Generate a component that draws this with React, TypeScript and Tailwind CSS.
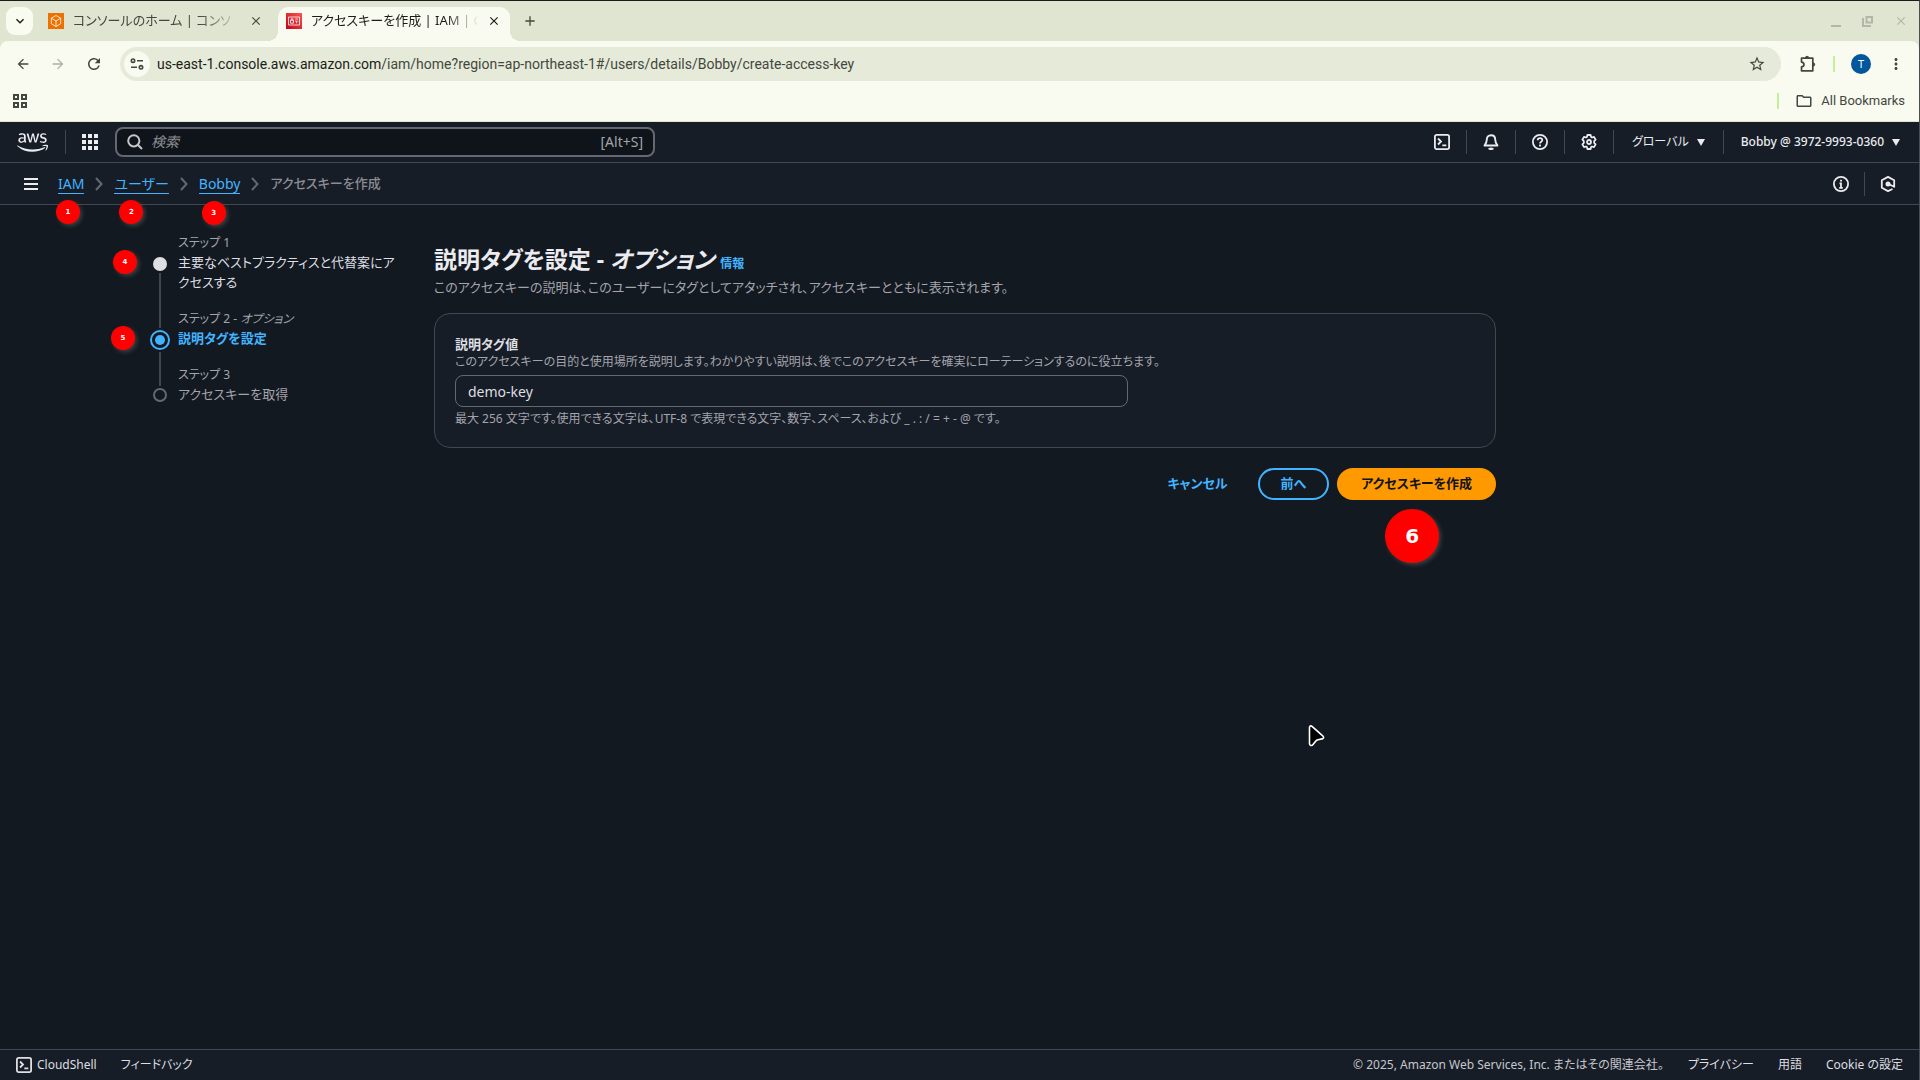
import React, { useState } from 'react';
import { FaAws } from 'react-icons/fa';
import {
  MdApps,
  MdArrowBack,
  MdArrowForward,
  MdClose,
  MdAdd,
  MdExpandMore,
  MdMoreVert,
  MdRefresh,
  MdStarOutline,
  MdOutlineFolder,
} from 'react-icons/md';

interface BadgeProps {
  n: number;
  className: string;
}

// Numbered callout that floats over the element it describes
const Badge: React.FC<BadgeProps> = ({ n, className }) => (
  <span
    className={`absolute z-10 flex items-center justify-center rounded-full bg-[#ff0000] font-bold text-white font-['DejaVu_Sans',sans-serif] shadow-[2px_2px_4px_rgba(90,90,90,0.6)] ${className}`}
  >
    {n}
  </span>
);

const smallBadge = 'h-6 w-6 text-[7px]';

const TerminalIcon = ({ className = '' }: { className?: string }) => (
  <svg viewBox="0 0 16 16" className={`h-4 w-4 ${className}`} fill="none" stroke="currentColor" strokeWidth="1.8">
    <rect x="0.9" y="0.9" width="14.2" height="14.2" rx="1.8" />
    <path d="M4 4.5 7 7.5 4 10.5M8.3 11.3h4" />
  </svg>
);

const BellIcon = () => (
  <svg viewBox="0 0 16 16" className="h-4 w-4" fill="none" stroke="currentColor" strokeWidth="1.9" strokeLinejoin="round">
    <path d="M8 1.2c-2.6 0-4.2 1.9-4.2 4.3 0 3-.9 4.3-2.3 6h13c-1.4-1.7-2.3-3-2.3-6C12.2 3.1 10.6 1.2 8 1.2z" />
    <path d="M6 14.2c.5.9 3.5.9 4 0" strokeWidth="2.4" />
  </svg>
);

const HelpIcon = () => (
  <svg viewBox="0 0 16 16" className="h-4 w-4" fill="none" stroke="currentColor" strokeWidth="1.8">
    <circle cx="8" cy="8" r="7.1" />
    <path d="M5.7 6.3C5.7 4.9 6.7 4.1 8 4.1s2.3.8 2.3 2C10.3 7.7 8 7.7 8 9.4" />
    <path d="M8 10.6v1.9" />
  </svg>
);

const GearIcon = () => (
  <svg viewBox="0 0 16 16" className="h-4 w-4" fill="none" stroke="currentColor" strokeWidth="1.8" strokeLinejoin="round">
    <path d="M6.4 1h3.2l.5 2 .9.5 2-.6 1.6 2.7-1.4 1.5v1.8l1.4 1.5-1.6 2.7-2-.6-.9.5-.5 2H6.4l-.5-2-.9-.5-2 .6-1.6-2.7 1.4-1.5V7.1L1.4 5.6 3 2.9l2 .6.9-.5z" />
    <circle cx="8" cy="8" r="2" />
  </svg>
);

const InfoIcon = () => (
  <svg viewBox="0 0 16 16" className="h-4 w-4" fill="none" stroke="currentColor" strokeWidth="1.8">
    <circle cx="8" cy="8" r="7.1" />
    <path d="M6.5 7.3H8v4.7M6.2 11.9h3.6M7.1 4.6h1.9" />
  </svg>
);

const HexIcon = () => (
  <svg viewBox="0 0 16 16" className="h-4 w-4" fill="none" stroke="currentColor" strokeWidth="1.8" strokeLinejoin="round">
    <path d="M12.5 13 8 15.1 1.8 11.7V4.3L8 .9l6.2 3.4v6.5L8.5 8" />
    <circle cx="8" cy="8" r="1.6" fill="currentColor" />
  </svg>
);

const Chevron = () => (
  <svg viewBox="0 0 8 14" className="h-[14px] w-2 text-[#656871]" fill="none" stroke="currentColor" strokeWidth="2">
    <path d="M1 1l5.5 6L1 13" />
  </svg>
);

const Caret = () => (
  <svg viewBox="0 0 8 7" className="h-[7px] w-2" fill="currentColor">
    <path d="M0 0h8L4 7z" />
  </svg>
);

const Tune = () => (
  <svg viewBox="0 0 14 12" className="h-3 w-[14px]" fill="none" stroke="currentColor" strokeWidth="1.6">
    <circle cx="3" cy="2.7" r="1.7" />
    <path d="M7 2.7h6M1 9.3h6" />
    <circle cx="11" cy="9.3" r="1.7" />
  </svg>
);

const Puzzle = () => (
  <svg viewBox="0 0 18 18" className="h-[18px] w-[18px]" fill="none" stroke="currentColor" strokeWidth="1.7" strokeLinejoin="round">
    <path d="M2.5 3.2h11.3v12.6H2.5v-3.9c3.3-.4 3.3-4.4 0-4.8z" />
    <path d="M6.4 3a1.7 1.7 0 0 1 3.4 0zM14 7.8a1.7 1.7 0 0 1 0 3.4z" fill="currentColor" strokeWidth="1" />
  </svg>
);

const CubeFavicon = () => (
  <svg viewBox="0 0 16 16" className="h-4 w-4 shrink-0" fill="none" stroke="#fff" strokeWidth="0.8">
    <rect width="16" height="16" fill="#ed7100" stroke="none" />
    <path d="M8 2.5l4.7 2.7v5.5L8 13.500l-4.700-2.800V5.200zM3.300 5.200 8 8l4.700-2.800M8 8v5.500" />
  </svg>
);

const IamFavicon = () => (
  <svg viewBox="0 0 16 16" className="h-4 w-4 shrink-0" fill="none" stroke="#fff" strokeWidth="0.8">
    <defs>
      <linearGradient id="iam" x1="0" y1="1" x2="1" y2="0">
        <stop offset="0" stopColor="#bd0816" />
        <stop offset="1" stopColor="#ff5252" />
      </linearGradient>
    </defs>
    <rect width="16" height="16" fill="url(#iam)" stroke="none" />
    <path d="M2.5 4h11v8h-11zM4.500 7.300h3v2.900h-3zM5.200 7.200V5.800h1.600v1.400M9.200 6h2.800M9.200 8h1.300v2.200M11.700 7.800v.9" />
  </svg>
);

const TabStrip = () => (
  <div className="flex h-10 items-stretch bg-[#e0e5d1] text-[#1b1d18]">
    <button aria-label="Search tabs" className="mt-[6px] ml-[6px] flex h-7 w-[27px] items-center justify-center rounded-[9px] bg-[#f9faf0]">
      <MdExpandMore className="h-4 w-4" />
    </button>
    <div className="ml-[15px] flex w-[230px] items-center pr-[15px] text-[#43483e]">
      <CubeFavicon />
      <span className="ml-[9px] min-w-0 flex-1 whitespace-nowrap text-[13px] [mask-image:linear-gradient(to_right,#000_75%,transparent)]">
        コンソールのホーム | コンソ
      </span>
      <button aria-label="Close tab" className="ml-2"><MdClose className="h-[14px] w-[14px]" /></button>
    </div>
    <div className="relative mt-[6px] flex w-[232px] items-center rounded-t-[10px] bg-[#f9faf0] pr-[9px] pb-[6px] pl-2">
      <span className="absolute bottom-0 -left-[10px] h-[10px] w-[10px] bg-[radial-gradient(circle_at_0_0,transparent_10px,#f9faf0_10px)]" />
      <span className="absolute -right-[10px] bottom-0 h-[10px] w-[10px] bg-[radial-gradient(circle_at_100%_0,transparent_10px,#f9faf0_10px)]" />
      <IamFavicon />
      <span className="ml-[9px] min-w-0 flex-1 whitespace-nowrap text-[13px] [mask-image:linear-gradient(to_right,#000_80%,transparent)]">
        アクセスキーを作成 | IAM | G
      </span>
      <button aria-label="Close tab" className="ml-2"><MdClose className="h-[14px] w-[14px]" /></button>
    </div>
    <button aria-label="New tab" className="ml-3"><MdAdd className="h-4 w-4 text-[#43483e]" /></button>
    <div className="ml-auto flex items-center gap-5 pr-[11px] text-[#b3b7a8]">
      <button aria-label="Minimize" className="flex h-3 w-3 items-end justify-center">
        <span className="h-[2px] w-[10px] bg-current" />
      </button>
      <button aria-label="Restore">
        <svg viewBox="0 0 12 12" className="h-3 w-3" fill="none" stroke="currentColor" strokeWidth="2">
          <path d="M4.5 2h5.5v5.5H4.5zM1 3v8h8" />
        </svg>
      </button>
      <button aria-label="Close window"><MdClose className="h-[14px] w-[14px]" /></button>
    </div>
  </div>
);

const Toolbar = () => (
  <div className="rounded-t-lg bg-[#f9faf0] text-[#43483e]">
    <div className="flex h-[46px] items-center">
      <div className="flex w-[120px] items-center gap-[19px] pl-[15px]">
        <button aria-label="Back"><MdArrowBack className="h-4 w-4" /></button>
        <button aria-label="Forward" className="text-[#adb0a4]"><MdArrowForward className="h-4 w-4" /></button>
        <button aria-label="Reload"><MdRefresh className="h-[18px] w-[18px]" /></button>
      </div>
      <div className="flex h-[34px] flex-1 items-center rounded-full bg-[#e6ead9] pr-[15px] pl-1">
        <span className="flex h-[26px] w-[26px] items-center justify-center rounded-full bg-[#f9faf0]"><Tune /></span>
        <div className="ml-[7px] flex-1 text-sm font-['Roboto',sans-serif]">
          <span className="text-[#1b1d18]">us-east-1.console.aws.amazon.com</span>
          /iam/home?region=ap-northeast-1#/users/details/Bobby/create-access-key
        </div>
        <button aria-label="Bookmark this page"><MdStarOutline className="h-[18px] w-[18px]" /></button>
      </div>
      <div className="flex items-center pr-[14px] pl-[18px]">
        <button aria-label="Extensions"><Puzzle /></button>
        <span className="mx-4 h-4 w-[2px] bg-[#c5ee9a]" />
        <button aria-label="Profile" className="flex h-5 w-5 items-center justify-center rounded-full bg-[#00579c] text-[11px] text-white">T</button>
        <button aria-label="Menu" className="ml-4"><MdMoreVert className="h-[18px] w-[18px]" /></button>
      </div>
    </div>
    <div className="flex h-[34px] items-center justify-between pr-[14px] pl-[13px] pb-[6px]">
      <button aria-label="Apps" className="grid grid-cols-2 gap-[2px]">
        {[0, 1, 2, 3].map((i) => (
          <span key={i} className="h-[6px] w-[6px] border-2 border-[#43483e]" />
        ))}
      </button>
      <div className="flex items-center">
        <span className="mr-4 h-4 w-[2px] bg-[#c5ee9a]" />
        <button className="flex items-center gap-2 text-[13px] font-['Roboto',sans-serif]">
          <MdOutlineFolder className="h-[18px] w-[18px]" />
          All Bookmarks
        </button>
      </div>
    </div>
    <div className="h-px bg-[#e0e5d1]" />
  </div>
);

const Divider = () => <span className="h-6 w-px bg-[#424650]" />;

const ConsoleHeader = () => (
  <header className="flex h-[41px] items-center justify-between border-b border-[#424650] bg-[#161d26] text-[#ebebf0]">
    <div className="flex items-center pl-[17px]">
      <a href="#" aria-label="AWS"><FaAws className="h-[25px] w-[31px]" /></a>
      <span className="ml-[17px] h-6 w-px bg-[#424650]" />
      <button aria-label="Services" className="ml-3"><MdApps className="h-6 w-6" /></button>
      <label className="ml-[13px] flex h-[30px] w-[540px] items-center rounded-lg border-2 border-[#656871] bg-[#0f141a] px-[10px]">
        <svg viewBox="0 0 16 16" className="h-4 w-4 text-[#c6c6cd]" fill="none" stroke="currentColor" strokeWidth="2">
          <circle cx="6.8" cy="6.8" r="5.6" />
          <path d="M10.8 10.8 15 15" />
        </svg>
        <input aria-label="検索" placeholder="検索" className="ml-2 flex-1 bg-transparent text-sm outline-none placeholder:text-[#8c8c94] placeholder:italic" />
        <span className="text-sm text-[#a4a4ad]">[Alt+S]</span>
      </label>
    </div>
    <div className="flex items-center pr-[19px] text-xs">
      <div className="flex items-center gap-4">
        <button aria-label="CloudShell"><TerminalIcon /></button>
        <Divider />
        <button aria-label="通知"><BellIcon /></button>
        <Divider />
        <button aria-label="サポート"><HelpIcon /></button>
        <Divider />
        <button aria-label="設定"><GearIcon /></button>
        <Divider />
      </div>
      <button className="mx-[18px] flex items-center gap-2">グローバル <Caret /></button>
      <Divider />
      <button className="ml-[17px] flex items-center gap-2 font-medium">Bobby @ 3972-9993-0360 <Caret /></button>
    </div>
  </header>
);

const crumbs = [
  { label: 'IAM', badge: 'top-[27px] -left-[2px]' },
  { label: 'ユーザー', badge: 'top-[27px] left-[5px]' },
  { label: 'Bobby', badge: 'top-7 left-[3px]' },
];

const Breadcrumbs = () => (
  <div className="flex h-[42px] items-center justify-between border-b border-[#424650] bg-[#161d26] pr-[23px] pl-6 text-sm text-[#ebebf0]">
    <nav className="flex items-center">
      <button aria-label="メニュー" className="mr-5 flex h-3 w-[14px] flex-col justify-between">
        <span className="h-[2px] w-full bg-current" />
        <span className="h-[2px] w-full bg-current" />
        <span className="h-[2px] w-full bg-current" />
      </button>
      {crumbs.map((c, i) => (
        <span key={c.label} className="relative flex items-center">
          <a href="#" className="mt-[2px] border-b border-[#42b4ff] leading-[18px] text-[#42b4ff]">{c.label}</a>
          <span className="mx-[11px]"><Chevron /></span>
          <Badge n={i + 1} className={`${smallBadge} ${c.badge}`} />
        </span>
      ))}
      <span className="text-[13px] font-medium text-[#8c8c94]">アクセスキーを作成</span>
    </nav>
    <div className="flex items-center gap-[15px]">
      <button aria-label="情報"><InfoIcon /></button>
      <Divider />
      <button aria-label="Amazon Q"><HexIcon /></button>
    </div>
  </div>
);

const Steps = () => (
  <ol className="w-[284px] shrink-0 pt-px pr-8 text-[13px] leading-5">
    <li className="relative flex">
      <div className="flex w-5 flex-col items-center">
        <span className="mt-[23px] mb-[2px] h-[14px] w-[14px] rounded-full bg-[#dedee3]" />
        <span className="w-[2px] flex-1 bg-[#424650]" />
      </div>
      <div className="ml-2 flex-1 pb-[18px]">
        <div className="text-xs leading-[18px] text-[#a4a4ad]">ステップ 1</div>
        <a href="#" className="block text-[#dedee3]">主要なベストプラクティスと代替案にアクセスする</a>
      </div>
      <Badge n={4} className={`${smallBadge} top-4 -left-[37px]`} />
    </li>
    <li className="relative flex">
      <div className="flex w-5 flex-col items-center">
        <span className="h-[18px] w-[2px] bg-[#424650]" />
        <span className="my-[2px] flex h-5 w-5 items-center justify-center rounded-full border-2 border-[#42b4ff]">
          <span className="h-[10px] w-[10px] rounded-full bg-[#42b4ff]" />
        </span>
        <span className="w-[2px] flex-1 bg-[#424650]" />
      </div>
      <div className="ml-2 flex-1 pb-[18px]">
        <div className="text-xs leading-[18px] text-[#a4a4ad]">ステップ 2 - <i>オプション</i></div>
        <div className="font-bold text-[#42b4ff]">説明タグを設定</div>
      </div>
      <Badge n={5} className={`${smallBadge} top-4 -left-[39px]`} />
    </li>
    <li className="flex">
      <div className="flex w-5 flex-col items-center">
        <span className="h-5 w-[2px] bg-[#424650]" />
        <span className="mt-[2px] h-[14px] w-[14px] rounded-full border-2 border-[#656871]" />
      </div>
      <div className="ml-2">
        <div className="text-xs leading-[18px] text-[#a4a4ad]">ステップ 3</div>
        <div className="text-[#a4a4ad]">アクセスキーを取得</div>
      </div>
    </li>
  </ol>
);

const TagForm = () => {
  const [value, setValue] = useState('demo-key');

  return (
    <form className="relative mt-[10px] flex-1" onSubmit={(e) => e.preventDefault()}>
      <h1 className="text-[23px] leading-8 font-bold text-[#ebebf0]">
        説明タグを設定 - <i>オプション</i> <a href="#" className="text-xs text-[#42b4ff]">情報</a>
      </h1>
      <p className="mt-[2px] text-[13px] leading-5 text-[#a4a4ad]">
        このアクセスキーの説明は、このユーザーにタグとしてアタッチされ、アクセスキーとともに表示されます。
      </p>

      <section className="mt-4 rounded-2xl border border-[#424650] bg-[#161d26] p-5">
        <label htmlFor="tag-value" className="block text-[13px] leading-5 font-bold text-[#dedee3]">説明タグ値</label>
        <p className="text-xs leading-4 text-[#a4a4ad]">
          このアクセスキーの目的と使用場所を説明します。わかりやすい説明は、後でこのアクセスキーを確実にローテーションするのに役立ちます。
        </p>
        <input
          id="tag-value"
          value={value}
          onChange={(e) => setValue(e.target.value)}
          className="mt-[5px] block h-8 w-[673px] rounded-lg border border-[#656871] bg-[#161d26] px-3 text-sm text-[#dedee3] outline-none"
        />
        <p className="mt-1 text-xs leading-4 text-[#a4a4ad]">
          最大 256 文字です。使用できる文字は、UTF-8 で表現できる文字、数字、スペース、および _ . : / = + - @ です。
        </p>
      </section>

      <div className="mt-5 flex justify-end text-[13px] font-bold">
        <button type="button" className="mr-[30px] h-8 text-[#42b4ff]">キャンセル</button>
        <button type="button" className="mr-2 h-8 rounded-full border-2 border-[#42b4ff] px-[21px] text-[#42b4ff]">前へ</button>
        <span className="relative">
          <button type="submit" className="h-8 rounded-full bg-[#ff9900] px-6 text-[#0f141a]">アクセスキーを作成</button>
          <Badge n={6} className="top-[41px] left-12 h-[54px] w-[54px] text-xl" />
        </span>
      </div>
    </form>
  );
};

const Footer = () => (
  <footer className="flex h-[31px] items-center border-t border-[#424650] bg-[#161d26] px-4 text-xs text-[#dedee3]">
    <button className="flex items-center gap-[5px]"><TerminalIcon /> CloudShell</button>
    <a href="#" className="ml-6">フィードバック</a>
    <span className="ml-auto text-[#c6c6cd]">© 2025, Amazon Web Services, Inc. またはその関連会社。</span>
    <a href="#" className="ml-6">プライバシー</a>
    <a href="#" className="ml-6">用語</a>
    <a href="#" className="ml-6">Cookie の設定</a>
  </footer>
);

const App: React.FC = () => (
  <div className="flex min-h-screen flex-col border-t border-r border-t-[#1a1a1a] border-r-[#4a4d52] bg-[#131920] font-['Noto_Sans','Noto_Sans_CJK_JP',sans-serif] [font-feature-settings:'palt']">
    <div className="bg-[#e0e5d1]">
      <TabStrip />
      <Toolbar />
    </div>
    <ConsoleHeader />
    <Breadcrumbs />
    <main className="relative flex-1 pr-6 pl-[150px]">
      <div className="flex max-w-[1346px] pt-7">
        <Steps />
        <TagForm />
      </div>
      <svg viewBox="0 0 18 24" className="absolute top-[519px] left-[1307px] h-6 w-[18px]" fill="#000" stroke="#fff" strokeWidth="1.6" strokeLinejoin="round">
        <path d="M2.5 3.5c0-1.5 1.4-2.1 2.5-1.1l11 9.8c1.1 1.1.7 2.4-.8 2.7l-4.3.8c-1 .2-1.7.7-2.3 1.5l-2.6 3.4c-1.2 1.5-3.5 1-3.5-1z" />
      </svg>
    </main>
    <Footer />
  </div>
);

export default App;
